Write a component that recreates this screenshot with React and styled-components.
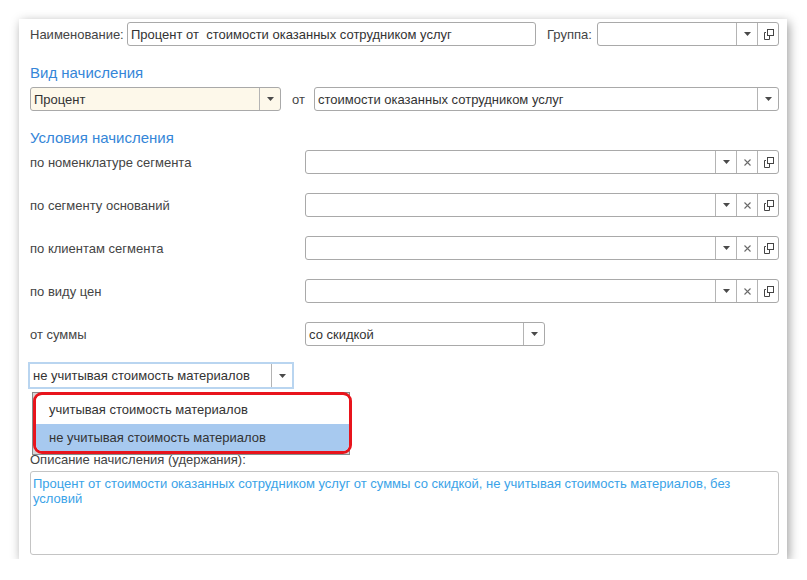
import React from 'react';
import styled, { createGlobalStyle } from 'styled-components';

const GlobalStyle = createGlobalStyle`
  html, body {
    margin: 0;
    padding: 0;
    background: #ffffff;
  }
  body {
    font-family: "Liberation Sans", Arial, sans-serif;
    font-size: 13px;
    color: #4a4a4a;
  }
`;

const Panel = styled.div`
  box-sizing: border-box;
  margin: 19px 0 0 19px;
  width: 768px;
  height: 540px;
  padding: 3px 8px 4px 11px;
  background: #ffffff;
  box-shadow: 2px 3px 10px rgba(0, 0, 0, 0.38);
  display: flex;
  flex-direction: column;
`;

const Row = styled.div`
  display: flex;
  align-items: center;
  height: 24px;
  margin-top: ${(p) => p.$top || 0}px;
`;

const Label = styled.span`
  white-space: nowrap;
  color: #444444;
  width: ${(p) => (p.$width ? `${p.$width}px` : 'auto')};
  margin-left: ${(p) => p.$left || 0}px;
  flex-shrink: 0;
  overflow: hidden;
`;

const Heading = styled.div`
  font-size: 15px;
  line-height: 20px;
  color: #3586d8;
  margin-top: ${(p) => p.$top || 0}px;
`;

const Field = styled.div`
  box-sizing: border-box;
  display: flex;
  align-items: stretch;
  height: 24px;
  width: ${(p) => (p.$width ? `${p.$width}px` : 'auto')};
  flex: ${(p) => (p.$width ? '0 0 auto' : '1 1 auto')};
  border: 1px solid #a9a9a9;
  border-radius: 3px;
  background: ${(p) => p.$bg || '#ffffff'};
  overflow: hidden;
`;

const FieldText = styled.div`
  flex: 1;
  display: flex;
  align-items: center;
  padding-left: 3px;
  color: #333333;
  white-space: nowrap;
  overflow: hidden;
`;

const FieldButton = styled.div`
  width: 20px;
  flex-shrink: 0;
  display: flex;
  align-items: center;
  justify-content: center;
  border-left: 1px solid #b4b4b4;
  color: #555555;
`;

const FocusWrap = styled.div`
  position: relative;
  margin-top: 16px;
  margin-left: -2px;
  width: 266px;
`;

const FocusField = styled.div`
  box-sizing: border-box;
  display: flex;
  height: 27px;
  border: 2px solid #b9d5f0;
  background: #ffffff;
`;

const Popup = styled.div`
  position: absolute;
  top: 30px;
  left: 4px;
  width: 318px;
  height: 63px;
  box-sizing: border-box;
  background: #d6d6d6;
  border: 1px solid #8a8a8a;
  z-index: 2;
`;

const Highlight = styled.div`
  position: absolute;
  inset: -1px -3px 0 0;
  border: 3px solid #e8141c;
  border-radius: 9px;
  background: #ffffff;
  overflow: hidden;
  display: flex;
  flex-direction: column;
`;

const Option = styled.div`
  height: 28px;
  display: flex;
  align-items: center;
  padding-left: 13px;
  color: #333333;
  background: ${(p) => (p.$active ? '#a7c9ef' : '#ffffff')};
  margin-top: ${(p) => p.$top || 0}px;
`;

const DescLabel = styled.div`
  margin-top: 63px;
  line-height: 16px;
  color: #444444;
`;

const Description = styled.div`
  box-sizing: border-box;
  margin-top: 3px;
  flex: 1;
  border: 1px solid #c4c4c4;
  border-radius: 3px;
  padding: 4px 2px 0 2px;
  line-height: 15px;
  color: #3aa3e8;
`;

const Arrow = () => (
  <svg width="7" height="4" viewBox="0 0 7 4">
    <path d="M0 0 H7 L3.5 4 Z" fill="#4a4a4a" />
  </svg>
);

const Cross = () => (
  <svg width="7" height="7" viewBox="0 0 7 7">
    <path d="M0.5 0.5 L6.5 6.5 M6.5 0.5 L0.5 6.5" stroke="#6a6a6a" strokeWidth="1.1" />
  </svg>
);

const OpenIcon = () => (
  <svg width="11" height="11" viewBox="0 0 11 11">
    <rect x="4.5" y="0.5" width="6" height="6" fill="none" stroke="#444" />
    <path d="M3 3.5 H1.5 V10.5 H6.5 V7" fill="none" stroke="#444" />
  </svg>
);

const Select = ({ value = '', width, bg, clear, open }) => (
  <Field $width={width} $bg={bg}>
    <FieldText>{value}</FieldText>
    <FieldButton>
      <Arrow />
    </FieldButton>
    {clear && (
      <FieldButton>
        <Cross />
      </FieldButton>
    )}
    {open && (
      <FieldButton>
        <OpenIcon />
      </FieldButton>
    )}
  </Field>
);

const conditions = [
  'по номенклатуре сегмента',
  'по сегменту оснований',
  'по клиентам сегмента',
  'по виду цен',
];

export default function App() {
  return (
    <>
      <GlobalStyle />
      <Panel>
        <Row>
          <Label $width={97}>Наименование:</Label>
          <Field $width={409}>
            <FieldText>Процент от&nbsp; стоимости оказанных сотрудником услуг</FieldText>
          </Field>
          <Label $left={11} $width={50}>
            Группа:
          </Label>
          <Select open />
        </Row>

        <Heading $top={17}>Вид начисления</Heading>
        <Row $top={4}>
          <Select value="Процент" width={251} bg="#fdf8ea" />
          <Label $left={11} $width={22}>
            от
          </Label>
          <Select value="стоимости оказанных сотрудником услуг" />
        </Row>

        <Heading $top={17}>Условия начисления</Heading>
        {conditions.map((c, i) => (
          <Row key={c} $top={i === 0 ? 2 : 19}>
            <Label $width={275}>{c}</Label>
            <Select clear open />
          </Row>
        ))}
        <Row $top={19}>
          <Label $width={275}>от суммы</Label>
          <Select value="со скидкой" width={240} />
        </Row>

        <FocusWrap>
          <FocusField>
            <FieldText>не учитывая стоимость материалов</FieldText>
            <FieldButton>
              <Arrow />
            </FieldButton>
          </FocusField>
          <Popup>
            <Highlight>
              <Option $top={1}>учитывая стоимость материалов</Option>
              <Option $active>не учитывая стоимость материалов</Option>
            </Highlight>
          </Popup>
        </FocusWrap>

        <DescLabel>Описание начисления (удержания):</DescLabel>
        <Description>
          Процент от стоимости оказанных сотрудником услуг от суммы со скидкой, не учитывая
          стоимость материалов, без условий
        </Description>
      </Panel>
    </>
  );
}
